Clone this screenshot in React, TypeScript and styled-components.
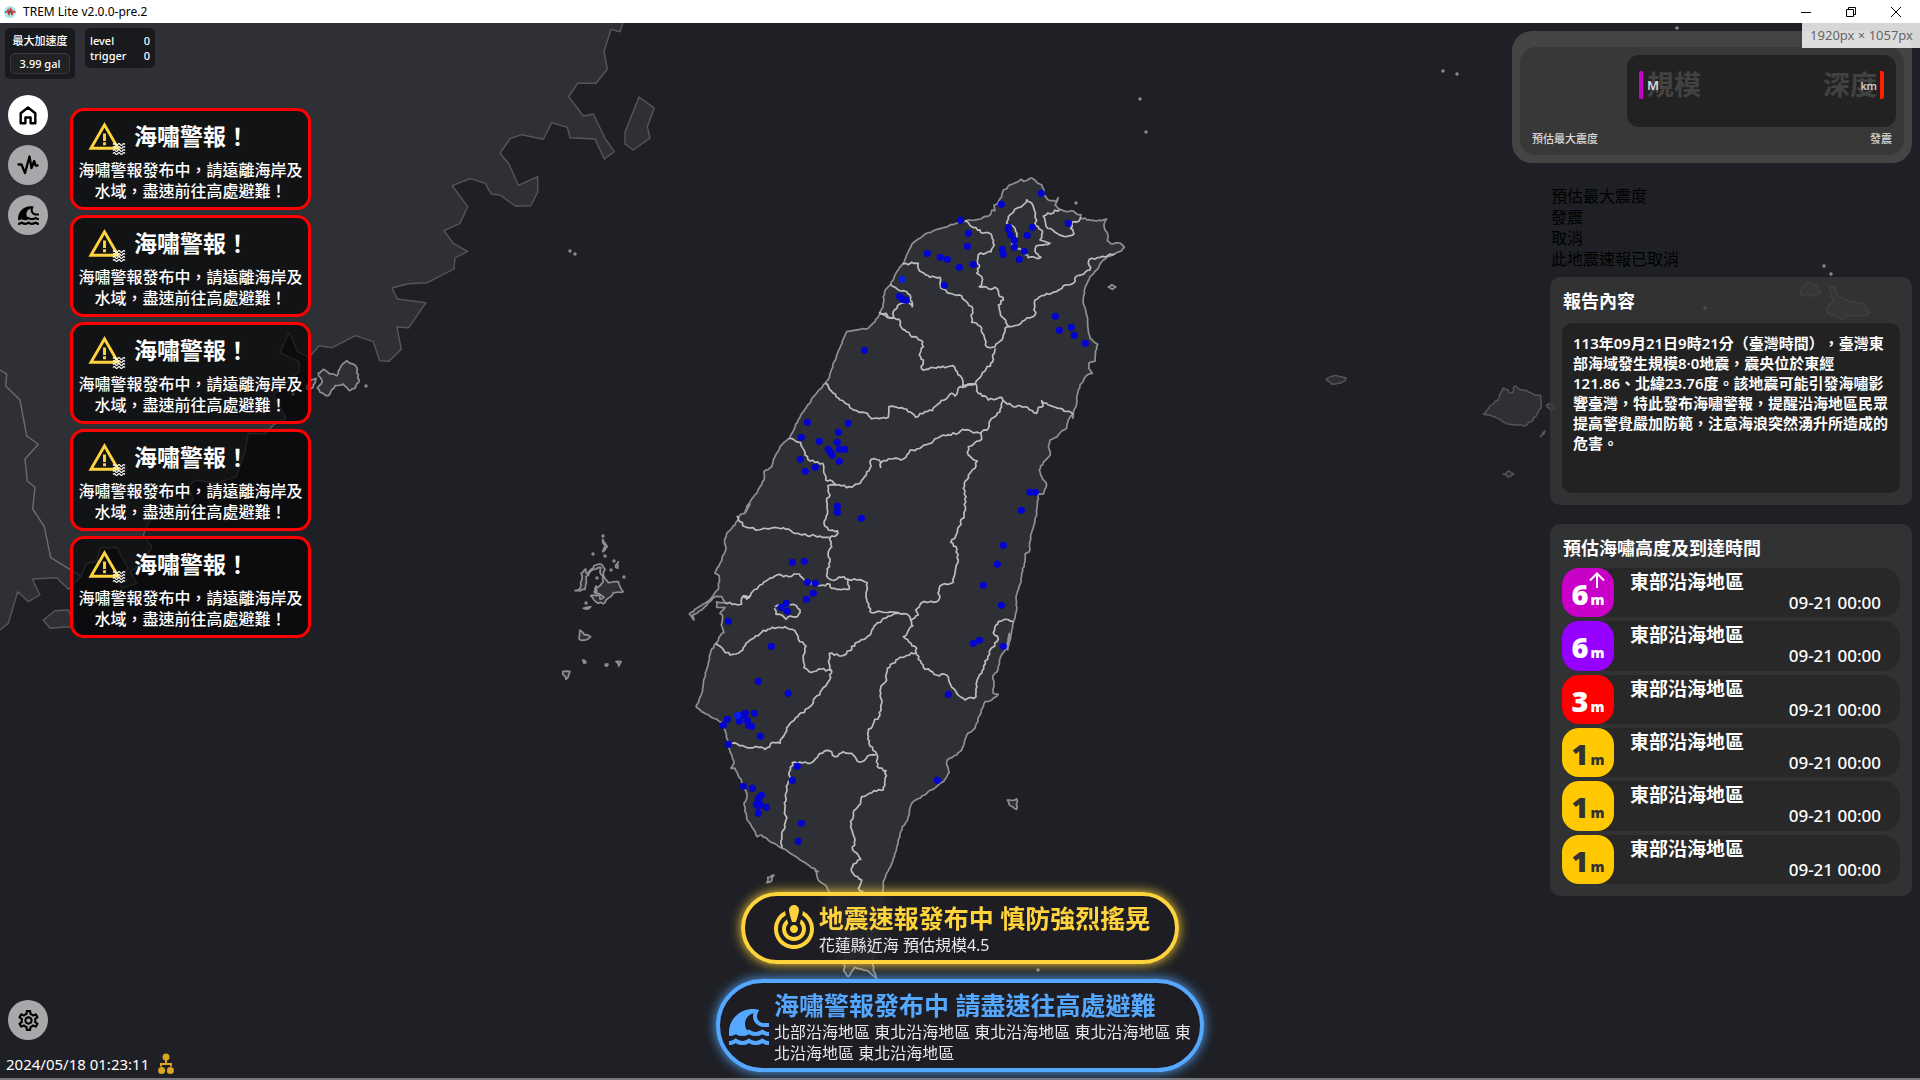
import React from 'react';
import styled, { createGlobalStyle } from 'styled-components';
import { MdCrisisAlert, MdOutlineSettings, MdTsunami, MdWarningAmber } from 'react-icons/md';

const GlobalStyle = createGlobalStyle`
  *, *::before, *::after { box-sizing: border-box; }
  body {
    margin: 0;
    background: #1f2025;
    color: #fff;
    font-family: "Noto Sans", "Noto Sans CJK TC", sans-serif;
    font-size: 16px;
    text-spacing-trim: space-all;
    overflow: hidden;
  }
  h2, p, ul { margin: 0; padding: 0; }
  ul { list-style: none; }
  button { font: inherit; padding: 0; border: 0; cursor: pointer; }
`;

/* ---------- map data: survey sheets use thirds of a pixel ---------- */

type Sheet = [number, number, string];
type Point = [number, number];

const read = (...sheets: Sheet[]): Point[] =>
  sheets.flatMap(([ox, oy, pts]) =>
    pts
      .trim()
      .split(/\s+/)
      .map((p): Point => {
        const [x, y] = p.split(',').map(Number);
        return [ox + x / 3, oy + y / 3];
      }),
  );

const join = (pts: Point[]) => pts.map(([x, y]) => `${x.toFixed(1)},${y.toFixed(1)}`).join(' ');

const trace = (...sheets: Sheet[]) => join(read(...sheets));

const noise = (x: number, y: number) => {
  const n = Math.sin(x * 12.9898 + y * 78.233) * 43758.5453;
  return n - Math.floor(n) - 0.5;
};

const ragged = (amount: number, ...sheets: Sheet[]) => {
  const pts = read(...sheets);
  const out: Point[] = [pts[0]];
  for (let i = 1; i < pts.length; i += 1) {
    const [ax, ay] = pts[i - 1];
    const [bx, by] = pts[i];
    const length = Math.hypot(bx - ax, by - ay) || 1;
    const steps = Math.max(1, Math.round(length / 2.5));
    for (let s = 1; s < steps; s += 1) {
      const x = ax + ((bx - ax) * s) / steps;
      const y = ay + ((by - ay) * s) / steps;
      const shift = noise(x, y) * amount;
      out.push([x - ((by - ay) / length) * shift, y + ((bx - ax) / length) * shift]);
    }
    out.push([bx, by]);
  }
  return join(out);
};

const mainland = trace(
  [280, 20, `1028,0 1028,10 1020,35 993,28 972,95 982,148 948,190 893,190 866,230 910,288 940,282 975,355 1003,395 973,417 945,357 870,353 862,322 815,308 790,358 725,344 690,356 660,400 687,432 715,496 773,470 773,517 752,557 706,558 660,525 633,522 616,490 570,476 517,497 563,560 540,610 492,632 520,670 563,694 525,714 522,747 442,788 385,791 336,804 352,837 438,848 386,923 351,921 364,988 327,1024 299,1022 280,965 226,947 157,983 117,977 88,1012`],
  [0, 300, `893,155 867,97 840,158 897,185 897,215 880,230 820,285 858,355 820,375 795,403 745,400 735,455 708,530 650,550 585,540 565,560 580,600 525,660 510,635 450,660 430,705 455,740 430,790 390,815 410,850 365,865 355,840 385,805 350,742 300,745 290,785 260,790 243,830 205,868 170,833 97,837 120,885 85,905 53,875 25,970 0,990 -20,990 -20,-900`],
);

const coastIsles = [
  trace([280, 20, `1077,231 1123,264 1102,320 1110,354 1060,390 1035,372 1035,337`]),
  trace([0, 300, `130,960 165,932 205,930 225,978 210,980 150,985`]),
];

const provinceLine = trace([0, 300, `0,210 20,222 17,258 60,300 80,408 115,433 75,477 82,543 105,562 98,627 133,680 152,773 210,808 243,830`]);

const taiwan = ragged(1.2,
  [860, 160, `0,508 25,505 45,485 70,440 70,410 80,385 92,373 110,335 128,312 150,265 160,248 175,237 205,218 250,203 300,185 355,178 390,165 396,150 405,152 402,135 412,132 425,110 430,90 440,86 450,74 475,65 485,58 490,64 515,54 528,64 545,74 552,92 550,105 565,120 587,125 595,113 585,135 600,148 625,155 640,153 650,162 663,164 662,176 675,174 680,180 700,181 725,182 740,177 733,190 735,210 744,225 742,242 752,251 780,249 793,262 785,272 765,281 740,292 725,305 715,325 690,350 675,385 670,430 682,470 683,500 690,535 705,548 713,553 706,575 706,603 686,610 686,625 697,640 682,645 660,675 652,705 650,730 640,760 638,775`],
  [740, 380, `1000,100 985,120 980,145 965,153 950,172 930,180 926,195 931,225 902,258 898,270 902,285 920,314 910,342 895,342 890,400 884,430 872,465 868,515 855,522 855,545 845,580 843,605 828,650 830,690 815,750 803,810`],
  [670, 600, `1018,100 1008,148 990,175 982,215 968,228 972,245 970,280 985,283 965,300 945,305 930,345 915,385 890,405 875,450 860,465 832,480 830,495 838,517 820,545 770,580 725,610 718,635 713,660 697,680 680,740 668,785 650,820 640,845 638,875`],
  [700, 870, `548,65 540,130 525,200 518,270 520,300 530,325 505,303 465,292 445,320 432,305 435,270 425,200 400,120 388,65 375,45 355,30 345,0`],
  [670, 600, `445,815 400,785 345,748 300,725 275,705 262,710 252,690 230,655 222,610 230,595 230,580 215,545 195,505 183,505 192,490 175,435 165,390 158,372 140,358 95,335 78,320 95,280 103,235 115,190 122,155 137,130`],
  [550, 500, `497,432 515,400 522,398 514,375 517,345 510,340 525,322 500,322 500,305 525,308 515,290 495,290 455,330 428,345 432,360 418,342 440,325 475,303 505,268 508,228 495,220 510,190 528,145 524,118 530,100 555,75 570,45 588,35 600,12`],
  [740, 380, `15,400 20,380 50,340 72,300 72,275 95,260 105,230 120,200 148,175 165,140 190,95 225,45 255,10`],
  [740, 330, `265,148 290,75 320,5`],
);

const countySheets: Sheet[][] = [
  [[860, 160, `315,182 335,200 360,210 368,220 393,222 403,255 393,275 355,284 352,310 358,322 350,340 365,350 365,375 358,380 385,386 405,382 430,420 415,435 425,470 450,500 475,495 495,480 525,465 525,420 545,407 590,395 610,377 640,370 650,348 690,330 688,298 720,292 765,281`]],
  [[860, 160, `450,500 435,505 425,540 405,560 380,560 365,505 350,490 335,487 338,445 305,408 270,400 243,385 240,352 210,352 178,332 175,310 155,307 145,314 128,312`]],
  [[860, 160, `92,373 115,390 140,395 150,405 157,440 145,425 125,430 100,455 97,475 60,460`]],
  [[860, 160, `57,457 78,460 85,472 118,478 120,495 150,525 188,545 190,560 178,585 190,600 185,627 205,628 235,620 255,623 280,617 308,660 308,677 345,672 365,645 398,605 398,585 406,565`]],
  [[860, 160, `345,668 355,700 380,712 385,720 425,712 430,722 460,740 495,740 530,760 535,742 550,738 545,722 565,735 640,762`]],
  [[740, 380, `255,10 300,60 350,92 375,98 395,117 445,112 447,80 500,87 527,112 555,95 577,92 600,68 635,40 645,48 660,20 708,12`]],
  [[740, 380, `790,60 780,95 750,122 745,145 722,160 695,155 668,148 655,160 610,165 580,183 525,212 510,210 490,237 460,236 425,245 422,262 417,240 395,237 387,272 355,312 335,322 290,315 270,300 257,300 248,250 210,243 195,225 182,188 148,175`]],
  [[740, 380, `290,315 263,318 270,345 260,355 263,395 252,430 265,450 292,452 290,465 270,473 225,467 180,463 130,443 55,450 15,440 0,425 -10,408`]],
  [[740, 380, `270,473 275,500 265,515 270,545 260,588 275,600 312,590 325,598 350,600 382,608 378,650 390,695 430,697 475,698 505,705 512,720 535,705 527,690 545,668 595,662 600,618 640,607 655,540 648,500 632,487 645,475 672,405 678,350 670,325 685,285 705,265 712,243 685,225 685,200 725,178 722,160`]],
  [[550, 500, `525,308 575,312 580,287 590,297 600,290`], [740, 380, `10,650 20,655 60,615 110,585 130,590 178,582 195,605 240,617 270,613 275,625 327,628 325,598`]],
  [[740, 380, `105,680 130,677 160,673 180,690 172,710 150,708 138,718 125,705 108,703 103,685`]],
  [[670, 600, `137,130 180,165 205,160 235,125 275,97 300,87 345,80 375,92 385,118 408,138 400,175 402,203 425,217 445,207 483,212`]],
  [[670, 600, `685,40 640,55 610,85 600,105 555,130 540,152 515,168 478,160 477,190 485,212 475,245 455,270 420,320 360,370 345,400 330,430 310,427 285,448 265,442 225,440 185,430`]],
  [[740, 380, `512,720 518,738 490,770 530,805`], [670, 600, `740,145 738,158 690,172 652,205 650,240 632,265 635,310 630,345 612,365 595,395 597,430 620,462 622,500 648,512 640,570 612,572 575,590 572,605 550,640 542,680 555,720 548,750 572,778 550,792 545,815 575,840 565,865 580,875`]],
  [[670, 600, `738,158 760,202 800,225 830,225 845,262 885,300 918,290 920,245 935,220 958,155 985,118 970,98 985,65 1005,58 1030,65`]],
  [[670, 600, `618,465 600,465 570,487 545,460 520,455 495,470 478,452 450,460 420,490 367,488 355,545 343,610 348,660 335,710 335,745`]],
  [[860, 160, `500,118 515,130 530,180 525,190 548,215 540,240 570,250 528,258 528,280 543,292 505,293 485,270 463,265 455,255 470,230 465,205 440,190 445,170 470,145 485,140 500,118`]],
  [[860, 160, `600,148 550,168 558,198 585,217 620,230 642,222 632,205 640,185 658,182 662,172`]],
];

const counties = countySheets.map((sheets) => ragged(2.4, ...sheets));

const isleSheets: Sheet[] = [
  [280, 20, `115,1060 130,1048 150,1062 170,1067 185,1035 200,1022 225,1035 238,1080 225,1105 210,1112 190,1092 165,1097 145,1127 120,1117 112,1105 127,1085 115,1060`],
  [280, 20, `88,1078 108,1075 100,1102 80,1107 88,1078`],
  [670, 600, `1012,600 1040,597 1040,628 1022,618 1012,600`],
  [670, 600, `293,832 312,825 305,842 290,848 293,832`],
  [860, 160, `745,380 755,374 767,381 757,388 745,380`],
  [550, 500, `75,272 90,265 95,240 93,220 107,207 112,222 132,197 155,193 165,208 160,225 175,248 205,245 208,255 220,275 190,278 165,308 145,310 122,287 148,285 150,298 162,292 140,280 137,262 152,255 160,245 158,228 150,215 152,202 130,208 108,230 105,268 75,272`],
  [550, 500, `138,258 134,270 140,282 132,276 140,264`],
  [550, 500, `90,390 103,405 122,410 108,420 88,418 90,390`],
  [550, 500, `38,515 60,515 48,538 38,515`],
  [550, 500, `198,485 213,485 206,498 198,485`],
  [550, 500, `158,118 162,126 172,140 165,150 158,155 166,136 158,125`],
  [550, 500, `100,325 122,320 108,328 100,325`],
  [550, 500, `205,185 203,205 197,202 205,185`],
  [550, 500, `98,480 108,488 102,490 98,480`],
  [550, 500, `166,492 174,492 172,498 166,497`],
];

const isles = isleSheets.map((sheet) => ragged(2, sheet));

const farIsleSheets: Sheet[] = [
  [1326, 370, `0,29 15,20 35,18 60,23 58,32 45,40 15,42 0,29`],
  [1480, 380, `10,102 36,75 54,60 69,24 96,39 105,18 144,36 183,48 183,84 159,120 129,138 81,132 51,114 10,102`],
  [1500, 465, `9,27 27,18 42,27 24,36 9,27`],
  [1530, 260, `812,92 835,65 865,78 870,100 850,110 830,102 815,108 812,92`],
  [1530, 260, `900,80 912,80 925,110 950,120 1000,132 1020,158 1010,166 960,168 930,176 892,160 890,140 908,125 900,80`],
  [1530, 260, `30,530 45,512 38,525 30,530`],
  [1530, 260, `50,435 65,432 75,445 62,450 50,435`],
];

const farIsles = farIsleSheets.map((sheet) => ragged(2, sheet));

const specks: Point[] = [
  [1140, 99], [1146, 132], [570, 251], [575, 254], [1443, 71], [1457, 74], [1677, 28], [1076, 203],
  [366, 386], [1038, 970], [593, 554], [603, 536], [605, 556], [1824, 266], [1831, 274], [1705, 308],
  [614, 561], [624, 577], [611, 570], [586, 603], [293, 394], [597, 578],
];

const stations = read(
  [860, 160, `544,100 424,133 302,181 325,220 322,259 202,280 241,292 262,298 298,322 340,313 253,376 118,409 128,418 139,421 446,202 445,208 452,226 463,241 463,262 427,268 430,283 493,274 478,298 502,226 517,202 625,190 586,469 598,511 634,502 643,526 676,550 13,571`],
  [740, 380, `202,127 325,130 295,157 184,172 238,184 292,187 265,208 271,217 277,226 298,208 314,208 298,244 181,238 226,262 196,274 292,378 292,397 364,415 870,337 886,337 844,391 790,496 772,553 730,616 784,676 157,547 193,544 202,607 226,610 220,640 199,658 139,670 124,682 142,694 700,790 718,781 790,799`],
  [670, 600, `175,64 304,139 265,244 355,280 226,340 218,346 253,340 172,358 160,376 208,364 232,361 235,376 245,379 271,409 175,433 382,499 367,541 220,559 247,565 274,586 265,595 259,613 271,613 265,619 289,622 265,640 394,670 385,724 835,283 802,541`],
);

const brightStations: Point[] = [[902.3, 279.3], [737.6, 715.4]];

/* ---------- styled parts ---------- */

const Window = styled.div`
  min-height: 100vh;
  display: flex;
  flex-direction: column;
`;

const TitleBar = styled.header`
  height: 23px;
  display: flex;
  align-items: center;
  background: #fff;
  color: #000;
  font-size: 12px;
  padding: 0 2px 0 4px;
  gap: 7px;
`;

const WindowControls = styled.div`
  margin-left: auto;
  display: flex;
`;

const ControlButton = styled.button`
  width: 45px;
  height: 23px;
  display: grid;
  place-items: center;
  background: transparent;
`;

const Screen = styled.main`
  position: relative;
  flex: 1;
  display: grid;
  grid-template-columns: 1fr auto 1fr;
  border-bottom: 2px solid #77777b;
`;

const MapCanvas = styled.svg`
  position: absolute;
  inset: 0;
  width: 100%;
  height: 100%;
`;

const SizeTip = styled.div`
  position: absolute;
  z-index: 2;
  top: 0;
  right: 0;
  padding: 0 7px 0 8px;
  font-size: 13px;
  line-height: 25px;
  color: #666;
  background: rgba(255, 255, 255, 0.82);
`;

const LeftSide = styled.div`
  position: relative;
  display: flex;
  flex-direction: column;
`;

const Stats = styled.div`
  display: flex;
  align-items: flex-start;
  gap: 10px;
  padding: 5px;
  height: 72px;
`;

const StatBox = styled.div`
  width: 70px;
  padding: 5px;
  border-radius: 5px;
  background: rgba(0, 0, 0, 0.45);
  font-size: 11px;
  line-height: 15px;
  font-weight: 500;
  text-align: center;
`;

const StatValue = styled.div`
  margin-top: 5px;
  border: 1px solid #38393c;
  border-radius: 5px;
  background: #222;
  line-height: 19px;
`;

const StatLine = styled.div`
  display: flex;
  justify-content: space-between;
`;

const LeftBody = styled.div`
  display: flex;
  gap: 22px;
  padding-left: 8px;
`;

const Nav = styled.nav`
  display: flex;
  flex-direction: column;
  gap: 10px;
`;

const RoundButton = styled.button<{ $active?: boolean }>`
  width: 40px;
  height: 40px;
  border-radius: 50%;
  display: grid;
  place-items: center;
  color: #000;
  background: ${(p) => (p.$active ? '#fff' : '#a8a8aa')};
`;

const Alerts = styled.ul`
  display: flex;
  flex-direction: column;
  gap: 5px;
  padding-top: 13px;
`;

const AlertCard = styled.li`
  width: 241px;
  height: 102px;
  padding: 6px 3px;
  border: 3px solid #f00;
  border-radius: 14px;
  background: rgba(0, 0, 0, 0.6);
  text-align: center;
  font-weight: 500;
  line-height: 21px;
`;

const AlertHead = styled.div`
  display: flex;
  align-items: center;
  gap: 12px;
  height: 43px;
  padding: 0 0 5px 11px;
`;

const AlertIcon = styled.span`
  position: relative;
  display: flex;
  color: #ffd33c;
`;

const WaveMark = styled.svg`
  position: absolute;
  right: -4px;
  bottom: -1px;
`;

const AlertTitle = styled.h2`
  font-size: 23px;
  font-weight: 600;
`;

const LeftFoot = styled.footer`
  margin-top: auto;
  padding: 0 6px 1px;
`;

const FootButton = styled.div`
  padding: 0 2px 11px;
`;

const Clock = styled.div`
  display: flex;
  align-items: center;
  gap: 9px;
  height: 26px;
  font-size: 15px;
`;

const Banners = styled.section`
  position: relative;
  align-self: end;
  display: flex;
  flex-direction: column;
  align-items: center;
  gap: 15px;
  padding-bottom: 6px;
`;

const Banner = styled.div<{ $tone: string; $inset: number }>`
  display: flex;
  align-items: center;
  max-width: 488px;
  padding: 6px ${(p) => p.$inset}px 4px;
  gap: 1px;
  border: 4px solid ${(p) => p.$tone};
  border-radius: 48px;
  background: rgba(30, 28, 34, 0.55);
  backdrop-filter: blur(6px);
  box-shadow: 0 0 12px ${(p) => p.$tone};
  color: ${(p) => p.$tone};

  > svg { flex: none; }
`;

const BannerTitle = styled.h2`
  font-size: 25px;
  line-height: 33px;
  font-weight: 600;
  white-space: nowrap;
`;

const BannerText = styled.p`
  color: #e8e8ea;
  line-height: 21px;
`;

const RightSide = styled.aside`
  position: relative;
  justify-self: end;
  width: 400px;
  margin: 8px 8px 0 0;
  display: flex;
  flex-direction: column;
  align-items: flex-end;
`;

const QuakeFrame = styled.section`
  width: 100%;
  padding: 16px 8px 8px;
  border-radius: 20px;
  background: #444;
`;

const QuakeCard = styled.div`
  padding: 8px 8px 0;
  border-radius: 16px;
  background: #383838;
`;

const QuakeFacts = styled.div`
  margin-left: 99px;
  height: 72px;
  padding: 16px 12px;
  border-radius: 12px;
  background: #222;
  display: flex;
  justify-content: space-between;
  align-items: flex-start;
`;

const Fact = styled.div<{ $bar: string; $end?: boolean }>`
  display: grid;
  align-items: center;
  justify-items: ${(p) => (p.$end ? 'end' : 'start')};
  height: 28px;
  padding: ${(p) => (p.$end ? '0 7px 0 0' : '0 0 0 8px')};
  background: linear-gradient(${(p) => p.$bar}, ${(p) => p.$bar}) ${(p) => (p.$end ? 'right' : 'left')} / 4px 100% no-repeat;
  border-radius: 2px;
  > * { grid-area: 1 / 1; }
`;

const FactName = styled.span`
  font-size: 27px;
  line-height: 28px;
  font-weight: 600;
  color: #424242;
`;

const FactUnit = styled.span<{ $small?: boolean }>`
  font-size: ${(p) => (p.$small ? 11 : 13)}px;
  font-weight: ${(p) => (p.$small ? 500 : 600)};
  color: #d8d8d8;
`;

const QuakeLabels = styled.div`
  display: flex;
  justify-content: space-between;
  padding: 0 4px;
  height: 28px;
  line-height: 24px;
  font-size: 11px;
  font-weight: 500;
  color: #d8d8d8;
`;

const Column = styled.div`
  width: 362px;
`;

const Residue = styled.div`
  padding: 23px 1px 7px;
  color: #000;
  line-height: 21px;
`;

const Panel = styled.section`
  margin-bottom: 19px;
  padding: 12px;
  border-radius: 10px;
  background: rgba(56, 56, 56, 0.75);
`;

const PanelTitle = styled.h2`
  padding-left: 1px;
  margin-bottom: 8px;
  font-size: 18px;
  line-height: 24px;
  font-weight: 600;
`;

const ReportText = styled.p`
  margin-top: 10px;
  min-height: 170px;
  padding: 10px 11px;
  border-radius: 10px;
  background: #222;
  font-size: 15px;
  line-height: 20px;
  font-weight: 600;
`;

const Waves = styled.ul`
  display: grid;
  grid-auto-rows: 1fr;
  gap: 4px;
  height: 316px;
`;

const WaveRow = styled.li`
  display: flex;
  border-radius: 17px;
  background: #282828;
`;

const Height = styled.div<{ $bg: string; $fg: string }>`
  position: relative;
  width: 52px;
  padding-top: 2px;
  display: flex;
  align-items: baseline;
  justify-content: center;
  gap: 2px;
  border-radius: 17px;
  background: ${(p) => p.$bg};
  color: ${(p) => p.$fg};
  font-family: "Open Sans", "Noto Sans", sans-serif;
  font-size: 29px;
  line-height: 47px;
  font-weight: 800;
`;

const HeightUnit = styled.span`
  font-size: 14px;
  line-height: 16px;
`;

const OverMark = styled.svg`
  position: absolute;
  top: 4px;
  right: 9px;
`;

const WaveInfo = styled.div`
  flex: 1;
  padding: 2px 19px 0 16px;
  display: flex;
  flex-direction: column;
`;

const WaveArea = styled.span`
  font-size: 19px;
  line-height: 24px;
  font-weight: 600;
`;

const WaveTime = styled.time`
  align-self: flex-end;
  font-size: 17px;
  line-height: 18px;
  font-weight: 500;
`;

/* ---------- drawings ---------- */

const TaiwanMap = () => (
  <MapCanvas viewBox="0 23 1920 1057" preserveAspectRatio="xMidYMin slice" aria-hidden="true">
    <g fill="#2f3035" stroke="#55565a" strokeWidth="1.4" strokeLinejoin="round">
      <polygon points={mainland} />
      {coastIsles.map((p, i) => <polygon key={i} points={p} />)}
      <polyline points={provinceLine} fill="none" stroke="#6a6b6e" />
      {farIsles.map((p, i) => <polygon key={i} points={p} />)}
    </g>
    <g fill="#2f3035" stroke="#909093" strokeWidth="1.7" strokeLinejoin="round">
      <polygon points={taiwan} />
      {isles.map((p, i) => <polygon key={i} points={p} />)}
      {counties.map((p, i) => <polyline key={i} points={p} fill="none" stroke="#bebec0" />)}
    </g>
    <g fill="#8a8b8e">
      {specks.map(([x, y], i) => <circle key={i} cx={x} cy={y} r="1.7" />)}
    </g>
    <g fill="#0404cf">
      {stations.map(([x, y], i) => <circle key={i} cx={x} cy={y} r="3.6" />)}
    </g>
    <g fill="#0a1ee6">
      {brightStations.map(([x, y], i) => <circle key={i} cx={x} cy={y} r="3.6" />)}
    </g>
  </MapCanvas>
);

const AppLogo = () => (
  <svg width="12" height="12" viewBox="0 0 12 12" aria-hidden="true">
    <circle cx="6" cy="6" r="6" fill="#a5e6ea" />
    <path d="M1 6h2l1-2 1 5 1.500-7 1.500 7 1-4 1 1h1.500" fill="none" stroke="#d33" strokeWidth="1.300" />
    <path d="M4 4.500l4 3M8 3.500l-4 4" stroke="#444" strokeWidth=".8" />
  </svg>
);

const HomeIcon = () => (
  <svg width="20" height="20" viewBox="0 0 20 20" fill="none" stroke="currentColor" strokeWidth="2.400" strokeLinejoin="round" aria-hidden="true">
    <path d="M2.700 8.200 10 2.500l7.300 5.700V18.300H12.600V12.500H7.400v5.800H2.700z" />
  </svg>
);

const PulseIcon = () => (
  <svg width="22" height="22" viewBox="0 0 22 22" fill="none" stroke="currentColor" strokeWidth="2.300" strokeLinecap="round" strokeLinejoin="round" aria-hidden="true">
    <path d="M1.500 10.500H4.500L8 19 12.500 2.500 14.500 14 17.200 7 18.500 11.500H20.500" />
  </svg>
);

const NetworkIcon = () => (
  <svg width="16" height="22" viewBox="0 0 16 22" fill="#daa520" aria-hidden="true">
    <circle cx="8" cy="4" r="3.500" />
    <path d="M7 7h2v3h5v3.500h-2V12H4v1.500H2V10h5z" />
    <circle cx="3.600" cy="17.500" r="3.500" />
    <circle cx="12.400" cy="17.500" r="3.500" />
  </svg>
);

const ripple = 'q1.200-1.800 2.400 0t2.400 0 2.400 0 2.400 0 2.400 0';

const alerts = [1, 2, 3, 4, 5];

const waves = [
  { height: 6, bg: '#c800c8', fg: '#fff', over: true },
  { height: 6, bg: '#9600ff', fg: '#fff' },
  { height: 3, bg: '#ff0000', fg: '#fff' },
  { height: 1, bg: '#ffc800', fg: '#323232' },
  { height: 1, bg: '#ffc800', fg: '#323232' },
  { height: 1, bg: '#ffc800', fg: '#323232' },
];

export default function App() {
  return (
    <Window lang="zh-TW">
      <GlobalStyle />
      <TitleBar>
        <AppLogo />
        <span>TREM Lite v2.0.0-pre.2</span>
        <WindowControls>
          <ControlButton aria-label="最小化">
            <svg width="10" height="10"><path d="M0 5.500H10" stroke="#000" /></svg>
          </ControlButton>
          <ControlButton aria-label="還原">
            <svg width="10" height="10" fill="none" stroke="#000"><path d="M.5 2.500H7.500V9.500H.5zM2.500 2.500V.5H9.500V7.500H7.500" /></svg>
          </ControlButton>
          <ControlButton aria-label="關閉">
            <svg width="10" height="10"><path d="M0 0 10 10M10 0 0 10" stroke="#000" /></svg>
          </ControlButton>
        </WindowControls>
      </TitleBar>

      <Screen>
        <TaiwanMap />
        <SizeTip>1920px × 1057px</SizeTip>

        <LeftSide>
          <Stats>
            <StatBox>
              最大加速度
              <StatValue>3.99 gal</StatValue>
            </StatBox>
            <StatBox>
              <StatLine><span>level</span><span>0</span></StatLine>
              <StatLine><span>trigger</span><span>0</span></StatLine>
            </StatBox>
          </Stats>
          <LeftBody>
            <Nav>
              <RoundButton $active aria-label="首頁"><HomeIcon /></RoundButton>
              <RoundButton aria-label="地震"><PulseIcon /></RoundButton>
              <RoundButton aria-label="海嘯"><MdTsunami size={25} /></RoundButton>
            </Nav>
            <Alerts>
              {alerts.map((id) => (
                <AlertCard key={id}>
                  <AlertHead>
                    <AlertIcon>
                      <MdWarningAmber size={35} />
                      <WaveMark width="14" height="13" viewBox="0 0 14 13" fill="none" stroke="#fff" strokeWidth="1.300">
                        <path d={`M1 2.500${ripple}M1 5.500${ripple}M1 8.500${ripple}M1 11.500${ripple}`} />
                      </WaveMark>
                    </AlertIcon>
                    <AlertTitle>海嘯警報！</AlertTitle>
                  </AlertHead>
                  <p>海嘯警報發布中，請遠離海岸及水域，盡速前往高處避難！</p>
                </AlertCard>
              ))}
            </Alerts>
          </LeftBody>
          <LeftFoot>
            <FootButton>
              <RoundButton aria-label="設定"><MdOutlineSettings size={25} /></RoundButton>
            </FootButton>
            <Clock>
              <time>2024/05/18 01:23:11</time>
              <NetworkIcon />
            </Clock>
          </LeftFoot>
        </LeftSide>

        <Banners>
          <Banner $tone="#ffd33c" $inset={25}>
            <MdCrisisAlert size={48} />
            <div>
              <BannerTitle>地震速報發布中 慎防強烈搖晃</BannerTitle>
              <BannerText>花蓮縣近海 預估規模4.5</BannerText>
            </div>
          </Banner>
          <Banner $tone="#55a8ff" $inset={5}>
            <MdTsunami size={48} />
            <div>
              <BannerTitle>海嘯警報發布中 請盡速往高處避難</BannerTitle>
              <BannerText>北部沿海地區 東北沿海地區 東北沿海地區 東北沿海地區 東北沿海地區 東北沿海地區</BannerText>
            </div>
          </Banner>
        </Banners>

        <RightSide>
          <QuakeFrame>
            <QuakeCard>
              <QuakeFacts>
                <Fact $bar="#c800c8">
                  <FactName>規模</FactName>
                  <FactUnit>M</FactUnit>
                </Fact>
                <Fact $bar="#ff1e00" $end>
                  <FactName>深度</FactName>
                  <FactUnit $small>km</FactUnit>
                </Fact>
              </QuakeFacts>
              <QuakeLabels>
                <span>預估最大震度</span>
                <span>發震</span>
              </QuakeLabels>
            </QuakeCard>
          </QuakeFrame>
          <Column>
            <Residue>
              <p>預估最大震度</p>
              <p>發震</p>
              <p>取消</p>
              <p>此地震速報已取消</p>
            </Residue>
            <Panel>
              <PanelTitle>報告內容</PanelTitle>
              <ReportText>
                113年09月21日9時21分（臺灣時間），臺灣東部海域發生規模8·0地震，震央位於東經121.86、北緯23.76度。該地震可能引發海嘯影響臺灣，特此發布海嘯警報，提醒沿海地區民眾提高警覺嚴加防範，注意海浪突然湧升所造成的危害。
              </ReportText>
            </Panel>
            <Panel>
              <PanelTitle>預估海嘯高度及到達時間</PanelTitle>
              <Waves>
                {waves.map((w, i) => (
                  <WaveRow key={i}>
                    <Height $bg={w.bg} $fg={w.fg}>
                      {w.height}
                      <HeightUnit>m</HeightUnit>
                      {w.over && (
                        <OverMark width="16" height="16" fill="none" stroke="#fff" strokeWidth="2">
                          <path d="M8 16V1.500M1 8.500 8 1.500 15 8.500" />
                        </OverMark>
                      )}
                    </Height>
                    <WaveInfo>
                      <WaveArea>東部沿海地區</WaveArea>
                      <WaveTime>09-21 00:00</WaveTime>
                    </WaveInfo>
                  </WaveRow>
                ))}
              </Waves>
            </Panel>
          </Column>
        </RightSide>
      </Screen>
    </Window>
  );
}
